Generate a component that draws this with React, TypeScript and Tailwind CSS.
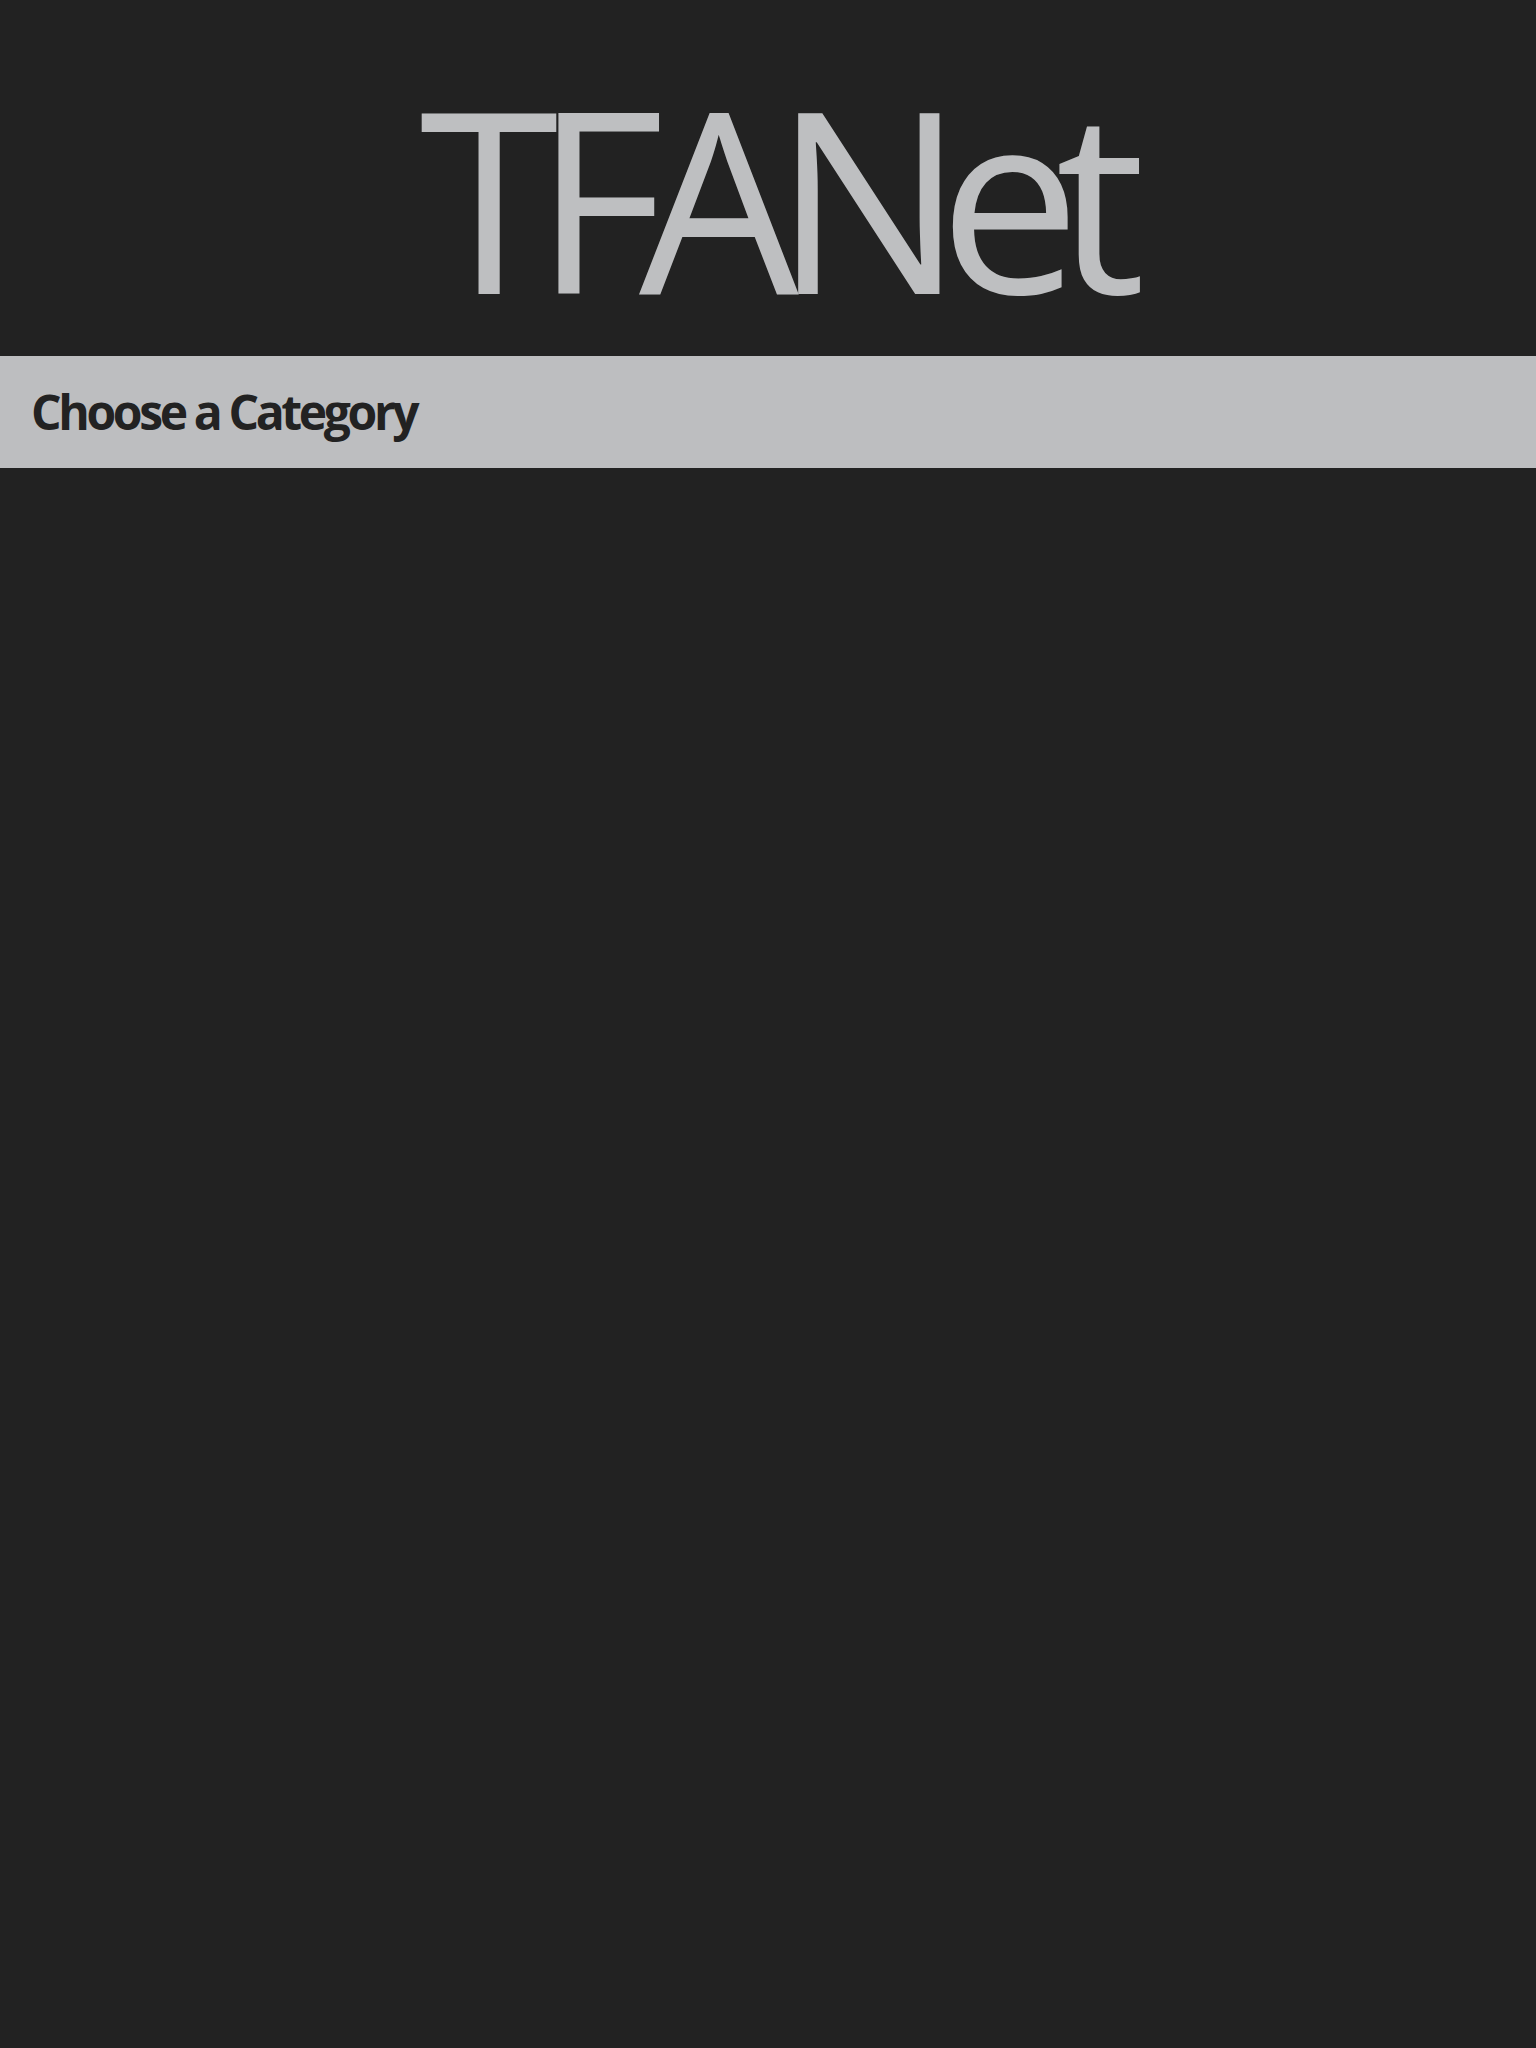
export default function App() {
  return (
    <div className="min-h-[2048px] w-full bg-[#222222]">
      <header className="flex h-[356px] items-start justify-center pl-[4px]">
        <h1
          className="mt-[70px] text-[253px] leading-none text-[#bebfc1] tracking-[-0.1em]"
          style={{ fontFamily: '"Open Sans", sans-serif' }}
        >
          TFANet
        </h1>
      </header>
      <div className="flex h-[112px] items-center bg-[#bdbec0] px-[31px]">
        <h2
          className="text-[48px] font-bold leading-none text-[#222222] tracking-[-0.07em]"
          style={{ fontFamily: '"Open Sans", sans-serif' }}
        >
          Choose a Category
        </h2>
      </div>
    </div>
  );
}
